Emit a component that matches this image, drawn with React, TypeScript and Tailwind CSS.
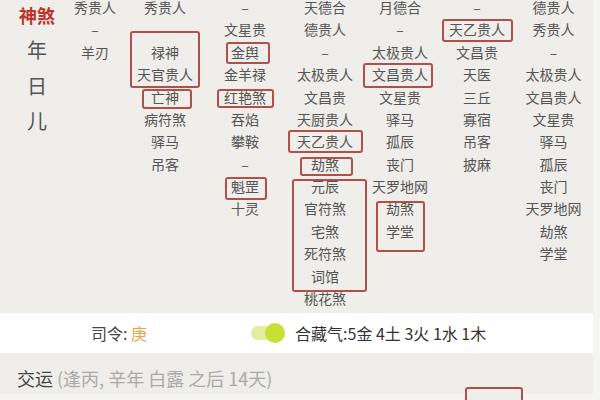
import React from 'react'

type Box = { rows: string[]; frame: string }
type Item = string | Box

const font = { fontFamily: '"Noto Sans CJK SC", "Noto Sans", sans-serif' }

// 每列神煞，Box 为红框标注的部分
const columns: Item[][] = [
  ['秀贵人', '–', '羊刃'],
  [
    '秀贵人',
    '',
    { rows: ['禄神', '天官贵人'], frame: '-top-[10px] -bottom-[2px] left-0 right-0' },
    { rows: ['亡神'], frame: 'top-[3px] -bottom-[1px] left-[12px] right-[8px]' },
    '病符煞',
    '驿马',
    '吊客',
  ],
  [
    '–',
    '文星贵',
    { rows: ['金舆'], frame: 'top-[1px] -bottom-[1px] left-[26px] right-[20px]' },
    '金羊禄',
    { rows: ['红艳煞'], frame: 'top-[3px] bottom-0 left-[17px] right-[16px]' },
    '吞焰',
    '攀鞍',
    '–',
    { rows: ['魁罡'], frame: 'top-[2px] -bottom-[3px] left-[25px] right-[23px]' },
    '十灵',
  ],
  [
    '天德合',
    '德贵人',
    '–',
    '太极贵人',
    '文昌贵',
    '天厨贵人',
    { rows: ['天乙贵人'], frame: 'top-0 bottom-0 -left-[2px] -right-[3px]' },
    { rows: ['劫煞'], frame: 'top-[4px] -bottom-[1px] left-[10px] right-[7px]' },
    {
      rows: ['元辰', '官符煞', '宅煞', '死符煞', '词馆'],
      frame: 'top-[4px] -bottom-[5px] left-[2px] -right-[7px]',
    },
    '桃花煞',
  ],
  [
    '月德合',
    '–',
    '太极贵人',
    { rows: ['文昌贵人'], frame: 'top-0 -bottom-[2px] left-[3px] right-[7px]' },
    '文星贵',
    '驿马',
    '孤辰',
    '丧门',
    '天罗地网',
    { rows: ['劫煞', '学堂'], frame: 'top-[4px] -bottom-[10px] left-[16px] right-[15px]' },
  ],
  [
    '–',
    { rows: ['天乙贵人'], frame: 'top-[1px] -bottom-[1px] left-[2px] right-[1px]' },
    '文昌贵',
    '天医',
    '三丘',
    '寡宿',
    '吊客',
    '披麻',
  ],
  ['德贵人', '秀贵人', '–', '太极贵人', '文昌贵人', '文星贵', '驿马', '孤辰', '丧门', '天罗地网', '劫煞', '学堂'],
]

function Cell({ text }: { text: string }) {
  return <div className="h-[22.38px] leading-[22.38px] text-center whitespace-nowrap">{text}</div>
}

function Column({ items }: { items: Item[] }) {
  return (
    <div className="flex flex-col">
      {items.map((item, i) =>
        typeof item === 'string' ? (
          <Cell key={i} text={item} />
        ) : (
          <div key={i} className="relative">
            {item.rows.map((r) => (
              <Cell key={r} text={r} />
            ))}
            <span className={`pointer-events-none absolute border-2 border-[#b24f4b] rounded-[3px] ${item.frame}`} />
          </div>
        )
      )}
    </div>
  )
}

export default function App() {
  return (
    <div className="w-[600px] h-[400px] overflow-hidden flex bg-[#f5f5f4]" style={font}>
      <div className="w-[593px] flex flex-col bg-[#efeeea]">
        {/* 神煞表 */}
        <div className="shrink-0 h-[317px] -mt-[4px] grid grid-cols-[60px_70px_70px_90px_70px_80px_74px_79px] text-[14px] text-[#555]">
          <div className="flex flex-col pl-[14px] text-center">
            <div className="mt-[8px] leading-[22px] text-[18px] font-bold text-[#c0332c]">神煞</div>
            <div className="mt-[6px] leading-[36px] text-[20px] text-[#555]">年</div>
            <div className="leading-[36px] text-[20px] text-[#555]">日</div>
            <div className="leading-[34px] text-[20px] text-[#555]">儿</div>
          </div>
          {columns.map((col, i) => (
            <Column key={i} items={col} />
          ))}
        </div>

        {/* 司令 / 合藏气 */}
        <div className="shrink-0 h-[40px] bg-white flex items-center pl-[91px] text-[16px]">
          <span className="text-[#444]">
            司令: <span className="text-[#f0a048]">庚</span>
          </span>
          <div className="ml-[104px] flex items-center">
            <div className="w-[24px] h-[14px] rounded-l-full bg-[#e2ed9e]" />
            <div className="-ml-[10px] w-[20px] h-[20px] rounded-full bg-[#c8df34]" />
          </div>
          <span className="ml-[10px] text-[#333]">合藏气:5金 4土 3火 1水 1木</span>
        </div>

        {/* 交运 */}
        <div className="shrink-0 h-[41px] pt-[13px] pl-[17px] text-[18px] leading-[24px]">
          <span className="text-[#444]">交运</span>
          <span className="text-[#aaa]"> (逢丙, 辛年 白露 之后 14天)</span>
        </div>

        <div className="shrink-0 h-[20px] bg-[#f5f5f3] pl-[465px]">
          <div className="-mt-[7px] w-[58px] h-[20px] border-2 border-[#b24f4b] rounded-[3px] bg-[#efeeea]" />
        </div>
      </div>
      <div className="flex-1" />
    </div>
  )
}
